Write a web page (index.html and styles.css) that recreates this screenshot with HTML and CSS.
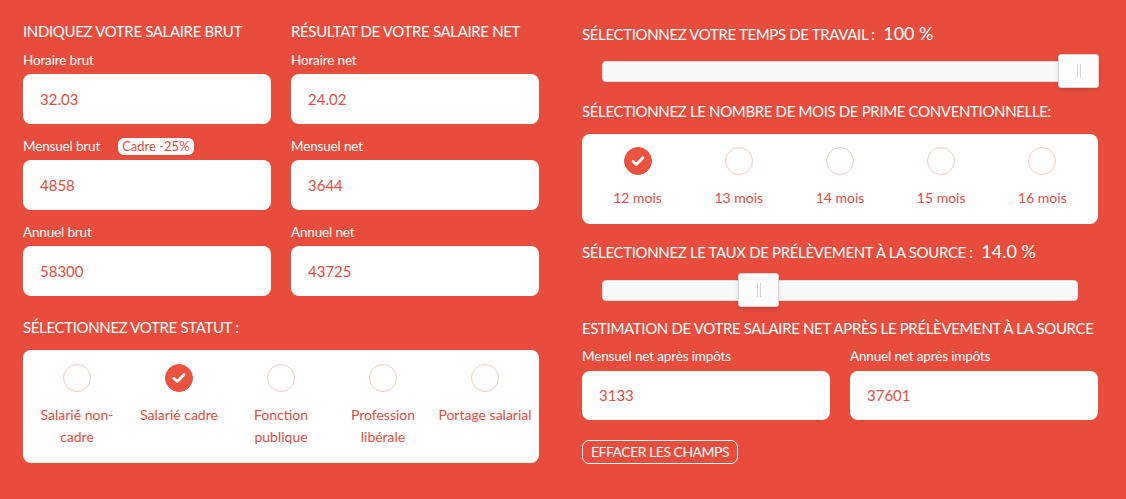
FILE: index.html
```html
<!DOCTYPE html>
<html lang="fr">
<head>
<meta charset="utf-8">
<title>Salaire brut / net</title>
<link rel="stylesheet" href="styles.css">
</head>
<body>
<div class="page">
  <section class="col col-left">
    <div class="pair">
      <div class="sub">
        <h2 class="title">INDIQUEZ VOTRE SALAIRE BRUT</h2>
        <div class="field">
          <div class="label">Horaire brut</div>
          <div class="input">32.03</div>
        </div>
        <div class="field">
          <div class="label">Mensuel brut <span class="badge">Cadre -25%</span></div>
          <div class="input">4858</div>
        </div>
        <div class="field">
          <div class="label">Annuel brut</div>
          <div class="input">58300</div>
        </div>
      </div>
      <div class="sub">
        <h2 class="title">RÉSULTAT DE VOTRE SALAIRE NET</h2>
        <div class="field">
          <div class="label">Horaire net</div>
          <div class="input">24.02</div>
        </div>
        <div class="field">
          <div class="label">Mensuel net</div>
          <div class="input">3644</div>
        </div>
        <div class="field">
          <div class="label">Annuel net</div>
          <div class="input">43725</div>
        </div>
      </div>
    </div>
    <h2 class="title title-statut">SÉLECTIONNEZ VOTRE STATUT :</h2>
    <div class="choices choices-statut">
      <div class="opt"><span class="radio"></span><span class="opt-label">Salarié non-<br>cadre</span></div>
      <div class="opt"><span class="radio checked"><svg viewBox="0 0 28 28"><path d="M9 14.4l3.3 3.2 6.6-6.8" fill="none" stroke="#fff" stroke-width="2.8" stroke-linecap="round" stroke-linejoin="round"/></svg></span><span class="opt-label">Salarié cadre</span></div>
      <div class="opt"><span class="radio"></span><span class="opt-label">Fonction<br>publique</span></div>
      <div class="opt"><span class="radio"></span><span class="opt-label">Profession<br>libérale</span></div>
      <div class="opt"><span class="radio"></span><span class="opt-label">Portage salarial</span></div>
    </div>
  </section>

  <section class="col col-right">
    <h2 class="title">SÉLECTIONNEZ VOTRE TEMPS DE TRAVAIL : <span class="val">100 %</span></h2>
    <div class="slider">
      <div class="track">
        <div class="handle" style="left: 455px"><i></i><i></i></div>
      </div>
    </div>

    <h2 class="title title-mois">SÉLECTIONNEZ LE NOMBRE DE MOIS DE PRIME CONVENTIONNELLE:</h2>
    <div class="choices choices-mois">
      <div class="opt"><span class="radio checked"><svg viewBox="0 0 28 28"><path d="M9 14.4l3.3 3.2 6.6-6.8" fill="none" stroke="#fff" stroke-width="2.8" stroke-linecap="round" stroke-linejoin="round"/></svg></span><span class="opt-label">12 mois</span></div>
      <div class="opt"><span class="radio"></span><span class="opt-label">13 mois</span></div>
      <div class="opt"><span class="radio"></span><span class="opt-label">14 mois</span></div>
      <div class="opt"><span class="radio"></span><span class="opt-label">15 mois</span></div>
      <div class="opt"><span class="radio"></span><span class="opt-label">16 mois</span></div>
    </div>

    <h2 class="title title-taux">SÉLECTIONNEZ LE TAUX DE PRÉLÈVEMENT À LA SOURCE : <span class="val">14.0 %</span></h2>
    <div class="slider slider-taux">
      <div class="track">
        <div class="handle" style="left: 135px"><i></i><i></i></div>
      </div>
    </div>

    <h2 class="title title-est">ESTIMATION DE VOTRE SALAIRE NET APRÈS LE PRÉLÈVEMENT À LA SOURCE</h2>
    <div class="pair pair-est">
      <div class="field">
        <div class="label">Mensuel net après impôts</div>
        <div class="input">3133</div>
      </div>
      <div class="field">
        <div class="label">Annuel net après impôts</div>
        <div class="input">37601</div>
      </div>
    </div>
    <button class="btn" type="button">EFFACER LES CHAMPS</button>
  </section>
</div>
</body>
</html>
```

FILE: styles.css
```css
* { box-sizing: border-box; }
html, body {
  margin: 0;
  padding: 0;
  background: #e74c3c;
}
body {
  font-family: Lato, "Liberation Sans", sans-serif;
  color: #fff;
  width: 1126px;
  height: 499px;
  overflow: hidden;
}
.page {
  display: grid;
  grid-template-columns: 516px 516px;
  column-gap: 43px;
  padding: 20px 0 0 23px;
}
.col { display: flex; flex-direction: column; }

.title {
  margin: 0;
  font-size: 15px;
  font-weight: 400;
  line-height: 22px;
  letter-spacing: -0.35px;
  white-space: nowrap;
}
.title .val {
  font-size: 18px;
  margin-left: 5px;
  letter-spacing: 0;
}

.pair {
  display: grid;
  grid-template-columns: 1fr 1fr;
  column-gap: 20px;
}
.sub { display: flex; flex-direction: column; }
.sub .field { margin-top: 8px; }
.sub .field + .field { margin-top: 12px; }

.label {
  font-size: 13.5px;
  letter-spacing: -0.15px;
  line-height: 20px;
  height: 20px;
  margin-bottom: 4px;
  display: flex;
  align-items: center;
  white-space: nowrap;
}
.badge {
  display: inline-block;
  margin-left: 18px;
  background: #fff;
  color: #e74c3c;
  font-size: 13px;
  letter-spacing: 0;
  line-height: 17px;
  padding: 0 4px;
  border-radius: 6px;
}
.input {
  height: 50px;
  background: #fff;
  border-radius: 8px;
  color: #e74c3c;
  font-size: 15px;
  line-height: 50px;
  padding-left: 17px;
}

.title-statut { margin-top: 20px; }

.choices {
  display: grid;
  grid-template-columns: repeat(5, 1fr);
  background: #fff;
  border-radius: 8px;
  margin-top: 12px;
}
.choices-statut { height: 113px; padding: 14px 3px 0; }
.choices-mois { height: 90px; padding: 13px 5px 0; }
.opt {
  display: flex;
  flex-direction: column;
  align-items: center;
  text-align: center;
}
.radio {
  width: 28px;
  height: 28px;
  border-radius: 50%;
  border: 1.5px solid #f8c8c0;
  display: flex;
  align-items: center;
  justify-content: center;
}
.radio.checked {
  background: #e9533f;
  border-color: #e9533f;
}
.radio svg { width: 28px; height: 28px; flex: none; }
.opt-label {
  margin-top: 12px;
  color: #e74c3c;
  font-size: 14px;
  line-height: 22px;
  white-space: nowrap;
}

/* right column */
.col-right { padding-top: 2px; }
.slider {
  padding: 7px 20px 7px;
  margin-top: 9px;
}
.track {
  position: relative;
  height: 21px;
  background: #f8f8f8;
  border: 1px solid #dcdcdc;
  border-radius: 4px;
  width: 476px;
}
.handle {
  position: absolute;
  top: -8px;
  width: 41px;
  height: 34px;
  background: #fdfdfd;
  border: 1px solid #d6d6d6;
  border-radius: 3px;
  box-shadow: 0 2px 4px rgba(0,0,0,0.12);
  display: flex;
  justify-content: center;
  align-items: center;
  gap: 2px;
}
.handle i {
  display: block;
  width: 1px;
  height: 14px;
  background: #d8d8d8;
}

.title-mois { margin-top: 11px; }
.title-taux { margin-top: 16px; }
.slider-taux { margin-top: 10px; }

.title-est { margin-top: 9px; }
.pair-est { margin-top: 7px; }
.pair-est .label { margin-bottom: 5px; }
.pair-est .input { height: 49px; line-height: 49px; }

.btn {
  align-self: flex-start;
  margin-top: 20px;
  height: 24px;
  padding: 0 8px;
  background: transparent;
  border: 1px solid #fff;
  border-radius: 7px;
  color: #fff;
  font-family: inherit;
  font-size: 14px;
  letter-spacing: -0.5px;
  line-height: 22px;
  cursor: pointer;
}
```
